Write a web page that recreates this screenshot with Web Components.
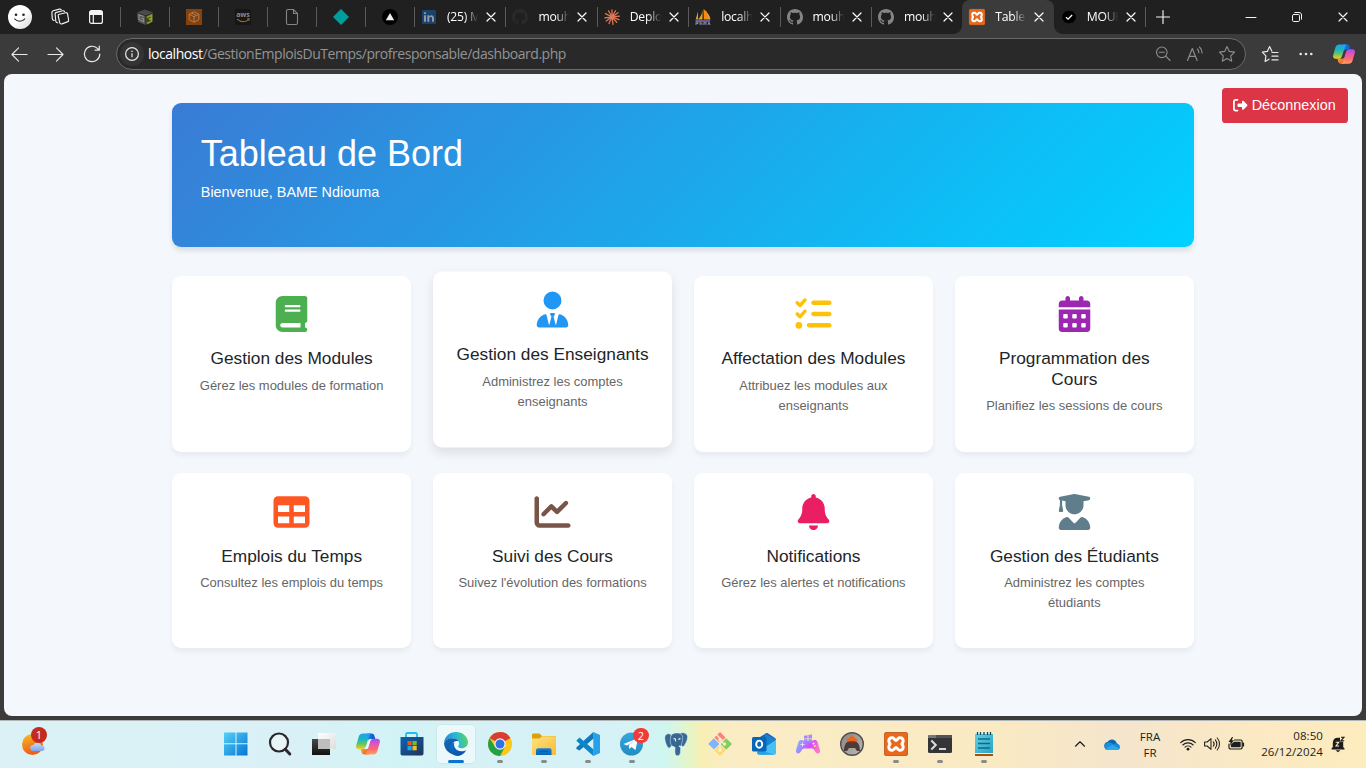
<!DOCTYPE html>
<html lang="fr">
<head>
<meta charset="utf-8">
<title>Tableau de Bord</title>
<style>
html,body{margin:0;height:100%;overflow:hidden;background:#3b3b3b}
body{font-family:"Liberation Sans",Arial,sans-serif}
</style>
</head>
<body>
<desktop-screen></desktop-screen>
<script>
const fa = (w, d) => [`0 0 ${w} 512`, `<path fill="currentColor" d="${d}"/>`];
const line = (s, w = 1) => `<g fill="none" stroke="currentColor" stroke-width="${w}" stroke-linecap="round" stroke-linejoin="round">${s}</g>`;
const GH = 'M8 0C3.58 0 0 3.58 0 8c0 3.54 2.29 6.53 5.47 7.59.4.07.55-.17.55-.38 0-.19-.01-.82-.01-1.49-2.01.37-2.53-.49-2.69-.94-.09-.23-.48-.94-.82-1.13-.28-.15-.68-.52-.01-.53.63-.01 1.08.58 1.23.82.72 1.21 1.87.87 2.33.66.07-.52.28-.87.51-1.07-1.78-.2-3.64-.89-3.64-3.95 0-.87.31-1.59.82-2.15-.08-.2-.36-1.02.08-2.12 0 0 .67-.21 2.2.82.64-.18 1.32-.27 2-.27s1.36.09 2 .27c1.53-1.04 2.2-.82 2.2-.82.44 1.1.16 1.92.08 2.12.51.56.82 1.27.82 2.15 0 3.07-1.87 3.75-3.65 3.95.29.25.54.73.54 1.48 0 1.07-.01 1.93-.01 2.2 0 .21.15.46.55.38A8.01 8.01 0 0 0 16 8c0-4.42-3.58-8-8-8z';
const grad = (id, x1, y1, x2, y2, ...stops) => `<linearGradient id="${id}" x1="${x1}" y1="${y1}" x2="${x2}" y2="${y2}">${stops.map((c, i) => `<stop offset="${i / (stops.length - 1)}" stop-color="${c}"/>`).join('')}</linearGradient>`;
const XAMPP = `<rect width="24" height="24" rx="2.5" fill="#e8691b"/><rect x=".5" y=".5" width="23" height="23" rx="2" fill="none" stroke="#c4622a"/><path d="M7.800 5.800h.8c1.500 0 2.300 2.700 3.400 2.700s1.900-2.700 3.400-2.700h.8a3 3 0 0 1 3 3c0 1.700-1.300 3.200-1.300 3.200s1.300 1.500 1.300 3.200a3 3 0 0 1-3 3h-.8c-1.500 0-2.300-2.700-3.400-2.700s-1.900 2.700-3.400 2.700h-.8a3 3 0 0 1-3-3c0-1.700 1.300-3.200 1.300-3.200s-1.300-1.500-1.300-3.200a3 3 0 0 1 3-3z" fill="none" stroke="#fff" stroke-width="3" stroke-linejoin="round"/>`;
const COPILOT = `<defs>${grad('a', .3, 0, .3, 1, '#2b9df0', '#16b5c8', '#65c466', '#f7cf1d')}${grad('b', .5, 0, .5, 1, '#a54ff0', '#e255b5', '#ff6a70', '#ffa45a')}${grad('c', 0, 0, 1, 0, '#1789f0', '#0b4fd6')}${grad('d', 0, 0, 1, 1, '#f5b52c', '#ef5133')}</defs><path d="M11 1.500h4.700c1.300 0 2.200.7 2.600 2l1 3.500h-4c-1.600 0-2.500.9-3 2.500z" fill="url(#c)"/><path d="M13 22.500H8.300c-1.300 0-2.200-.7-2.600-2l-1-3.500h4c1.600 0 2.500-.9 3-2.500z" fill="url(#d)"/><path d="M7 1.500h8.500c-1.500.4-2 1.300-2.500 2.900L10 14c-.7 2-1.700 3.200-4 3.200H3c-2.200 0-3.500-1.600-2.800-3.800l2.500-8.700C3.300 2.600 4.900 1.500 7 1.500z" fill="url(#a)"/><path d="M17 22.500H8.500c1.500-.4 2-1.300 2.500-2.900L14 10c.7-2 1.700-3.200 4-3.200h3c2.200 0 3.500 1.600 2.800 3.800l-2.500 8.700c-.6 2.100-2.200 3.200-4.300 3.200z" fill="url(#b)"/><path d="M12.700 7.300h2.700c-.8.500-1.200 1.300-1.600 2.600l-1.900 6.300c-.2.500-.5.700-1 .7H9c.8-.5 1.200-1.300 1.500-2.300l2-6.500z" fill="var(--gap,#eefafc)"/>`;
const ICONS = {
  book: fa(448, 'M96 0C43 0 0 43 0 96V416c0 53 43 96 96 96H384h32c17.700 0 32-14.300 32-32s-14.300-32-32-32V384c17.700 0 32-14.300 32-32V32c0-17.700-14.300-32-32-32H384 96zm0 384H352v64H96c-17.700 0-32-14.300-32-32s14.300-32 32-32zm32-240c0-8.800 7.200-16 16-16H336c8.800 0 16 7.200 16 16s-7.200 16-16 16H144c-8.800 0-16-7.200-16-16zm16 48H336c8.800 0 16 7.200 16 16s-7.200 16-16 16H144c-8.800 0-16-7.200-16-16s7.200-16 16-16z'),
  tie: fa(448, 'M96 128a128 128 0 1 0 256 0A128 128 0 1 0 96 128zm94.500 200.200l18.600 31L175.800 483.100l-36-146.900c-2-8.100-9.800-13.400-17.900-11.300C51.900 342.400 0 405.800 0 481.300c0 17 13.800 30.700 30.700 30.700H162.500c0 0 0 0 .1 0H168 280h5.500c0 0 0 0 .1 0H417.300c17 0 30.700-13.800 30.700-30.700c0-75.500-51.900-138.900-121.900-156.400c-8.100-2-15.900 3.300-17.900 11.300l-36 146.900L238.900 359.200l18.600-31c6.400-10.700-1.300-24.200-13.700-24.200H224 204.300c-12.400 0-20.100 13.600-13.700 24.200z'),
  list: fa(512, 'M152.100 38.200c9.900 8.900 10.700 24 1.800 33.900l-72 80c-4.400 4.900-10.600 7.800-17.200 7.900s-12.900-2.400-17.600-7L7 113C-2.300 103.600-2.300 88.400 7 79s24.600-9.400 33.900 0l22.100 22.100 55.100-61.200c8.900-9.900 24-10.700 33.900-1.800zm0 160c9.900 8.900 10.700 24 1.800 33.900l-72 80c-4.400 4.900-10.600 7.800-17.200 7.900s-12.900-2.400-17.600-7L7 273c-9.400-9.400-9.400-24.600 0-33.900s24.600-9.400 33.900 0l22.100 22.100 55.100-61.200c8.900-9.900 24-10.700 33.900-1.800zM224 96c0-17.700 14.300-32 32-32H480c17.700 0 32 14.300 32 32s-14.300 32-32 32H256c-17.700 0-32-14.300-32-32zm0 160c0-17.700 14.300-32 32-32H480c17.700 0 32 14.300 32 32s-14.300 32-32 32H256c-17.700 0-32-14.300-32-32zM160 416c0-17.700 14.300-32 32-32H480c17.700 0 32 14.300 32 32s-14.300 32-32 32H192c-17.700 0-32-14.300-32-32zM48 368a48 48 0 1 1 0 96 48 48 0 1 1 0-96z'),
  calendar: fa(448, 'M128 0c17.700 0 32 14.300 32 32V64H288V32c0-17.700 14.300-32 32-32s32 14.300 32 32V64h48c26.500 0 48 21.500 48 48v48H0V112C0 85.500 21.500 64 48 64H96V32c0-17.700 14.300-32 32-32zM0 192H448V464c0 26.500-21.500 48-48 48H48c-26.500 0-48-21.500-48-48V192zm64 80v32c0 8.800 7.200 16 16 16h32c8.800 0 16-7.200 16-16V272c0-8.800-7.200-16-16-16H80c-8.800 0-16 7.200-16 16zm128 0v32c0 8.800 7.200 16 16 16h32c8.800 0 16-7.200 16-16V272c0-8.800-7.200-16-16-16H208c-8.800 0-16 7.200-16 16zm144-16c-8.800 0-16 7.200-16 16v32c0 8.800 7.200 16 16 16h32c8.800 0 16-7.200 16-16V272c0-8.800-7.200-16-16-16H336zM64 400v32c0 8.800 7.200 16 16 16h32c8.800 0 16-7.200 16-16V400c0-8.800-7.200-16-16-16H80c-8.800 0-16 7.200-16 16zm144-16c-8.800 0-16 7.200-16 16v32c0 8.800 7.200 16 16 16h32c8.800 0 16-7.200 16-16V400c0-8.800-7.200-16-16-16H208zm112 16v32c0 8.800 7.200 16 16 16h32c8.800 0 16-7.200 16-16V400c0-8.800-7.200-16-16-16H336c-8.800 0-16 7.200-16 16z'),
  table: fa(512, 'M64 256V160H224v96H64zm0 64H224v96H64V320zm224 96V320H448v96H288zM448 256H288V160H448v96zM64 32C28.700 32 0 60.700 0 96V416c0 35.300 28.700 64 64 64H448c35.300 0 64-28.700 64-64V96c0-35.300-28.700-64-64-64H64z'),
  chart: fa(512, 'M64 64c0-17.700-14.300-32-32-32S0 46.300 0 64V400c0 44.200 35.800 80 80 80H480c17.700 0 32-14.300 32-32s-14.300-32-32-32H80c-8.800 0-16-7.200-16-16V64zm406.600 86.600c12.500-12.500 12.500-32.800 0-45.300s-32.800-12.500-45.300 0L320 210.700l-57.400-57.400c-12.500-12.500-32.800-12.500-45.300 0l-112 112c-12.500 12.500-12.500 32.800 0 45.300s32.800 12.500 45.300 0L240 221.300l57.400 57.400c12.500 12.500 32.800 12.500 45.300 0l128-128z'),
  bell: fa(448, 'M224 0c-17.700 0-32 14.300-32 32V51.200C119 66 64 130.600 64 208v18.800c0 47-17.300 92.400-48.500 127.600l-7.400 8.300c-8.400 9.400-10.400 22.900-5.300 34.400S19.400 416 32 416H416c12.600 0 24-7.400 29.200-18.900s3.100-25-5.300-34.400l-7.400-8.300C401.300 319.200 384 273.900 384 226.800V208c0-77.400-55-142-128-156.800V32c0-17.700-14.300-32-32-32zm45.300 493.300c12-12 18.700-28.300 18.700-45.300H224 160c0 17 6.700 33.300 18.700 45.300s28.300 18.700 45.300 18.700s33.300-6.700 45.300-18.700z'),
  graduate: fa(448, 'M219.300 .5c3.100-.6 6.300-.6 9.400 0l200 40C439.900 42.700 448 52.600 448 64s-8.100 21.300-19.300 23.500L352 102.900V160c0 70.700-57.300 128-128 128s-128-57.300-128-128V102.900L48 93.300v65.100l15.700 78.400c.9 4.700-.3 9.600-3.300 13.300s-7.600 5.900-12.400 5.900H16c-4.800 0-9.300-2.100-12.400-5.900s-4.300-8.600-3.300-13.300L16 158.400V86.600C6.500 83.300 0 74.300 0 64C0 52.600 8.100 42.700 19.300 40.500l200-40zM111.900 327.700c10.500-3.400 21.800 .4 29.400 8.500l71 75.500c6.300 6.700 17 6.700 23.300 0l71-75.500c7.600-8.100 18.900-11.900 29.400-8.500C401 348.600 448 409.400 448 481.300c0 17-13.800 30.700-30.700 30.700H30.700C13.800 512 0 498.200 0 481.300c0-71.900 47-132.700 111.900-153.600z'),
  logout: fa(512, 'M377.900 105.900L500.700 228.700c7.200 7.200 11.300 17.100 11.300 27.300s-4.100 20.100-11.300 27.300L377.900 406.100c-6.400 6.400-15 9.900-24 9.900c-18.700 0-33.900-15.200-33.900-33.900l0-62.100-128 0c-17.700 0-32-14.300-32-32l0-64c0-17.700 14.300-32 32-32l128 0 0-62.100c0-18.700 15.200-33.900 33.900-33.900c9 0 17.600 3.600 24 9.900zM160 96L96 96c-17.700 0-32 14.300-32 32l0 256c0 17.700 14.300 32 32 32l64 0c17.700 0 32 14.300 32 32s-14.300 32-32 32l-64 0c-53 0-96-43-96-96L0 128C0 75 43 32 96 32l64 0c17.700 0 32 14.300 32 32s-14.300 32-32 32z'),

  profile: ['0 0 24 24', `<defs>${grad('a', 0, 0, 1, 1, '#fff', '#fff', '#d6d6d6')}</defs><circle cx="12" cy="12" r="12" fill="url(#a)"/><circle cx="8" cy="9.800" r="1.300" fill="#222"/><circle cx="15.500" cy="9.800" r="1.300" fill="#222"/><path d="M6.800 14c2.300 3 7.600 3 9.900 0" fill="none" stroke="#222" stroke-width="1.200" stroke-linecap="round"/>`],
  spaces: ['0 0 18 18', line('<path d="M8.300 6.200l6.400-1.500c1-.2 1.700.3 1.900 1.200l1 6.100c.2 1-.4 1.700-1.300 1.900l-5.300 2c-1 .3-1.900-.1-2.200-1.100L7.200 8c-.2-1 .2-1.600 1.100-1.800zM6.700 14.800l-.9-.3c-.6-.3-.9-.8-1-1.500L4.100 6.300c-.1-1 .4-1.700 1.300-1.900l6.300-1.600c.8-.2 1.500 0 1.800.7M3.200 12.500l-.9-.4c-.6-.3-.9-.8-1-1.500L.9 4.700c-.1-1 .4-1.600 1.300-1.900l6.200-1.700c.8-.2 1.400 0 1.800.5"/>', 1.15)],
  tabs: ['0 0 14 14', line('<rect x=".6" y=".6" width="12.800" height="12.800" rx="2"/><path d="M.6 4.500h12.800M4.300 4.500v9"/>', 1.2) + '<path d="M1 1h12v3H1z" fill="currentColor"/>'],
  gns: ['0 0 16 16', '<path d="M0 3.500L8 .5l8 3-7 3z" fill="#4b4b4b"/><path d="M0 4l8.500 3v9L1 12.800z" fill="#545454"/><path d="M9 7l7-3v8.500L9 16z" fill="#3f4722"/><path d="M10 8.500L14.500 6v3L12 10.300l2.500-.8v2.800L10 14.500" fill="none" stroke="#8d9f2c" stroke-width="1.500"/><path d="M6.800 7.500L2 5.800v4.700l4.500 2.300v-3L4.200 9" fill="none" stroke="#8b8b8b" stroke-width="1.200"/>'],
  box: ['0 0 16 16', '<path fill="#84420f" d="M0 0h16v16H0z"/><g fill="none" stroke="#b07c52"><path d="M8 2.800l4.800 2.400v5.500L8 13.200l-4.800-2.500V5.200zM3.200 5.200L8 7.800l4.800-2.600M8 7.800v5.400M5.500 4l5 2.600"/></g>'],
  aws: ['0 0 16 16', '<path fill="#161616" d="M0 0h16v16H0z"/><text x="8" y="8" font-family="Open Sans,sans-serif" font-size="7" font-weight="700" fill="#8a8a8a" text-anchor="middle">aws</text><path d="M2 10c3.500 3 8 3.200 11.500 1M12 9.900l2.300-.1-.5 2.100" fill="none" stroke="#8b632d" stroke-width="1.100"/>'],
  page: ['0 0 16 16', '<path d="M2.500 2c0-.9.600-1.500 1.500-1.500h5.500l4 4V14c0 .9-.6 1.500-1.500 1.500H4c-.9 0-1.500-.6-1.500-1.500zM9.500.8V4.500h3.800" fill="none" stroke="#858585" stroke-width="1.100"/>'],
  diamond: ['0 0 16 16', '<path d="M8 0l8 8-8 8-8-8z" fill="#009e9b"/>'],
  tri: ['0 0 16 16', '<circle cx="8" cy="8" r="8" fill="#000"/><path d="M8 4l4.200 7.200H3.800z" fill="#eee"/>'],
  linkedin: ['0 0 16 16', '<rect x="1" y="1" width="14" height="14" rx="1" fill="#1b426c"/><path d="M3 6.300h2v6.500H3zM3 3.200h2v1.900H3zM6.300 6.300h1.900v1c1.300-2 4.800-1.400 4.800 1.600v3.900h-2V9.300c0-1.900-2.700-1.900-2.700 0v3.500h-2z" fill="#8c98a8"/>'],
  github: ['0 0 16 16', `<path d="${GH}" fill="#858585"/>`],
  githubdark: ['0 0 16 16', `<path d="${GH}" fill="#2a2a2b"/>`],
  claude: ['0 0 16 16', '<g stroke="#dd7656" stroke-width="1.300" stroke-linecap="round"><path d="M8 8L8 .8M8 8l3.500-6.200M8 8l6-4.300M8 8l7.300-.8M8 8l7 2.700M8 8l4.700 5.300M8 8l1 7.300M8 8l-3 6.500M8 8l-5.800 4M8 8L.8 8.800M8 8L1.400 4.600M8 8L4.500 1.700"/></g>'],
  pma: ['0 0 16 16', '<path d="M3 2.500v8H.7z" fill="#d5a155"/><path d="M7.500 1v9.500H3C6 7.500 7.200 4.500 7.500 1z" fill="#f6a01a"/><path d="M8.500.3c3.800 2 5.800 5.700 5.700 10.200H8.800z" fill="#f58c12"/><path d="M12.500 4.500c1.800 1.500 2.700 3.600 2.800 6h-1.500z" fill="#dca453"/><path d="M0 11h15.500l-1 2H1z" fill="#5f6184"/><path d="M1 16v-3h2v1.500H1M5 16v-4M5 14h2v2M9 16v-3l1 1.500 1-1.500v3M13 16l1-3 1 3" fill="none" stroke="#8184af"/>'],
  xampp: ['0 0 24 24', XAMPP],
  check: ['0 0 16 16', '<path d="M8 1.500l2 .7 2.200.2 1.200 1.800L14.800 6v4l-1.400 1.800-1.200 1.800-2.200.2-2 .7-2-.7-2.200-.2-1.200-1.800L1.200 10V6l1.400-1.800 1.200-1.800L6 2.200z" fill="#000"/><path d="M5 8.300l2.100 1.900 4-4.200" fill="none" stroke="#fff" stroke-width="1.300"/>'],
  x: ['0 0 10 10', line('<path d="M1 1l8 8M9 1L1 9"/>', 1.2)],
  plus: ['0 0 14 14', line('<path d="M7 .5v13M.5 7h13"/>', 1.15)],
  min: ['0 0 10 10', line('<path d="M0 5.500h10"/>', 1)],
  restore: ['0 0 10 10', line('<rect x=".5" y="2.500" width="7" height="7" rx="1.200"/><path d="M2.800.5h4.200c1.500 0 2.500 1 2.500 2.500v4.200"/>', 1)],
  back: ['0 0 18 18', line('<path d="M17 9H1M8 2L1 9l7 7"/>', 1.2)],
  fwd: ['0 0 18 18', line('<path d="M1 9h16M10 2l7 7-7 7"/>', 1.2)],
  reload: ['0 0 18 18', line('<path d="M16.800 9a7.700 7.700 0 1 1-2.700-5.900L16.300 5M16.300 1v4.200h-4.200"/>', 1.2)],
  info: ['0 0 14 14', line('<circle cx="7" cy="7" r="6.400"/>', 1.2) + '<path d="M6.400 6.200h1.200v4H6.400zM6.300 3.700h1.400V5H6.300z" fill="currentColor"/>'],
  zoomout: ['0 0 16 16', line('<circle cx="6.800" cy="6.300" r="5.300"/><path d="M4.300 6.300h5M10.800 10.200L15 14.500"/>', 1.1)],
  read: ['0 0 18 16', line('<path d="M1.500 14.500l4.800-12 4.800 12M3.200 10.300h6.200M11.500 3c1 1 1.300 2.200 1.300 3.700M13.500 1c1.800 1.600 2.600 3.500 2.600 6"/>', 1.15)],
  star: ['0 0 18 18', line('<path d="M9 1.500l2.300 4.900 5.300.7-3.900 3.700 1 5.400L9 13.600l-4.700 2.600 1-5.400L1.400 7.100l5.300-.7z"/>', 1.1)],
  fav: ['0 0 18 18', line('<path d="M8 14.200l-3.900 2.300.8-5.600L1.300 7.100l5-.7L8.600 1.500l2.200 4.600M11 7.500h6M11 11.200h6M11 14.900h6"/>', 1.2)],
  dots: ['0 0 14 4', '<g fill="currentColor"><circle cx="1.700" cy="2" r="1.300"/><circle cx="7" cy="2" r="1.300"/><circle cx="12.300" cy="2" r="1.300"/></g>'],
  copilot: ['0 0 24 24', COPILOT],

  weather: ['0 0 28 28', `<defs>${grad('a', 0, 0, .3, 1, '#f2c531', '#f48a1c', '#ec5f18')}${grad('b', 0, 0, 0, 1, '#c5d9fa', '#7ea5e8')}</defs><circle cx="10.500" cy="14.500" r="10.500" fill="url(#a)"/><path d="M11 21a3 3 0 0 1 .3-6 4.600 4.600 0 0 1 8.200.6 2.700 2.700 0 0 1 .6 5.400z" fill="url(#b)"/>`],
  start: ['0 0 24 24', `<defs><linearGradient id="a" gradientUnits="userSpaceOnUse" x1="0" y1="0" x2="24" y2="24"><stop stop-color="#57d2fb"/><stop offset="1" stop-color="#0074d1"/></linearGradient></defs><path fill="url(#a)" d="M0 .5h11.500v10.800H0zM12.500.5h11v10.800h-11zM0 12.300h11.500v11.200H0zM12.500 12.300h11v11.200h-11z"/>`],
  search: ['0 0 24 24', '<circle cx="11" cy="10.500" r="9" fill="#e8f4f6" stroke="#29292b" stroke-width="2.200"/><path d="M17.300 17.300l4.500 4.700" stroke="#29292b" stroke-width="3" stroke-linecap="round"/>'],
  taskview: ['0 0 24 24', `<defs>${grad('a', 0, 0, 0, 1, '#484848', '#111')}${grad('b', 0, 0, 1, 1, '#fff', '#ddd')}</defs><path d="M0 7h18v16H0z" fill="url(#a)"/><path d="M6 1h18v16H6z" fill="url(#b)"/><path d="M6 7h12v10H6z" fill="#bebebe"/>`],
  store: ['0 0 24 24', `<defs>${grad('a', 0, 0, 1, 1, '#0a65b4', '#223259')}</defs><path d="M6 6V2.500C6 1.700 6.500 1 7.500 1h8c1 0 1.500.7 1.500 1.500V6" fill="none" stroke="#25baf0" stroke-width="1.800"/><path d="M.5 5h23v16.500c0 1-.8 2-2 2h-19c-1.200 0-2-1-2-2z" fill="url(#a)"/><path d="M7.500 9h4.200v4.200H7.500z" fill="#f05023"/><path d="M12.500 9h4.200v4.200h-4.200z" fill="#7fba22"/><path d="M7.500 14h4.200v4.300H7.500z" fill="#17a9ef"/><path d="M12.500 14h4.200v4.300h-4.200z" fill="#ffbd18"/>`],
  edge: ['0 0 24 24', `<defs>${grad('a', 0, .5, 1, .3, '#2387d6', '#27b6dc', '#60d55a')}${grad('b', 0, 0, .7, 1, '#1768b9', '#0b56a5')}${grad('c', 0, 0, 1, 1, '#0b75ce', '#0b489c')}</defs><path d="M0 11C.5 4.500 5.500 0 12 0c7 0 12 5 12 10.300 0 3.800-3 6-6.200 6-2.600 0-3.700-.9-3.700-1.700 0-.7 1-1 1-3.100 0-2.900-2.800-5.200-6.400-5.200C4.300 6.300 1.200 8 0 11z" fill="url(#a)"/><path d="M0 11.500C1 8.200 4.200 6.300 8.300 6.300c3.200 0 5.400 1.300 6.300 3-3.500-1-6.600 1.300-6.600 5.200 0 4.500 3.800 8.200 8.800 7.200A12 12 0 0 1 0 11.500z" fill="url(#b)"/><path d="M10.300 10.500c-1.300 4.500 2.200 8.800 7 8.800 2.500 0 4-.8 5-1.400-2 3.600-5 5.600-8.600 6-4.700-.2-8-4-7.900-8.500 0-2.300 2-4.400 4.500-4.900z" fill="url(#c)"/>`],
  chrome: ['0 0 24 24', '<circle cx="12" cy="12" r="12" fill="#fbc71a"/><path d="M12 12L1.600 6A12 12 0 0 1 22.400 6z" fill="#d83c32"/><path d="M1.600 6l5.600 9 4.800 3-4 5.300A12 12 0 0 1 1.600 6z" fill="#25a047"/><path d="M12 12l4.800 3L12 24a12 12 0 0 1-4.500-.9z" fill="#25a047"/><circle cx="12" cy="12" r="5.700" fill="#f5f6f5"/><circle cx="12" cy="12" r="4.500" fill="#2d72e8"/>'],
  explorer: ['0 0 24 24', `<defs>${grad('a', 0, 0, 1, 1, '#ffe37f', '#f6ba37')}${grad('b', 0, 0, 0, 1, '#1380d7', '#0766b7')}</defs><path d="M0 3c0-1 .6-1.500 1.500-1.500h6L10 4h13c.6 0 1 .4 1 1v4H0z" fill="#dca008"/><path d="M0 6.500h7.500L10 4.200h13c.6 0 1 .4 1 1V22c0 .6-.4 1-1 1H1c-.6 0-1-.4-1-1z" fill="url(#a)"/><path d="M4 23v-4.500C4 17 5 16.200 6.300 16.200h11c1.300 0 2.200.8 2.200 2.300V23z" fill="url(#b)"/><path d="M7.500 19.200h8.500" stroke="#07569d"/>`],
  code: ['0 0 24 24', '<path d="M17.300 0L24 3v18l-6.700 3z" fill="#26a0e7"/><path d="M17.300 0v6.700L3.500 18.500 1.700 17.700.3 16.200v-.8z" fill="#1278bd"/><path d="M.3 8.700L3.500 5.500l13.800 11.800V24z" fill="#0a86ca"/>'],
  telegram: ['0 0 24 24', `<defs>${grad('a', 0, 0, 0, 1, '#35a7de', '#258bbf')}</defs><circle cx="11.500" cy="12" r="11.500" fill="url(#a)"/><path d="M3.500 12L18 6.300 15.500 18l-4-2.900-2.100 2-.7-4L16 7.900l-9 5.700z" fill="#fff"/>`],
  postgres: ['0 0 24 24', '<g fill="#376894" stroke="#d9eef5" stroke-width=".5"><path d="M7 2.500C3 .5 0 3 1 8c.6 3 2 7.500 4 8 1.300.3 2.500-2 3-3.500z"/><path d="M15.500 1.500C20-.5 24 2 23.500 6c-.5 3-2.500 7-4.500 9l-3-3z"/><path d="M7.500 2.800C10 .5 16 .2 18 3c1.300 2.500.6 7-1 10.500-.5 2-.5 3.500-.5 5.500 0 3-1 4.700-3 4.700-1.800 0-2.500-1.300-2.500-3.400l-.2-5-3.500-1.800C5.800 10.500 6 5.500 7.500 2.800z"/></g><path d="M9.500 7c1.500-1 2.500 0 2 2.500M16.500 7c-1-.8-1.700-.3-1.500 1M9.500 14.500c-.7 1.200-2 1.500-3.500 1.500M15 14l3 1.800 4-.8M11 15.500c-.5 2-1.500 2-3 1.500" stroke="#eaf4f6" stroke-width="1.100" fill="none"/>'],
  git: ['0 0 24 24', '<path d="M12 0l5.500 5.500L12 11 6.500 5.500z" fill="#fd7f7f"/><path d="M5.800 6.200L11.500 12 6 17.500.2 12z" fill="#80b4ff"/><path d="M18.200 6.200L24 12l-5.800 5.700L12.500 12z" fill="#85ce5e"/><path d="M12 12.500l5.500 5.800L12 24l-5.500-5.500z" fill="#fbdc72"/><path d="M8.300 2.800L15 9M12 6.500V19M12.500 9l4.500 4" stroke="#fbedc7" stroke-width="1.400"/><g fill="#fbedc7"><circle cx="12" cy="7.500" r="1.700"/><circle cx="16.500" cy="12" r="1.700"/><circle cx="12" cy="18" r="1.900"/></g>'],
  outlook: ['0 0 24 24', '<path d="M4 7.500L14 1.200c.6-.3 1.200-.3 1.800 0L23 6c.6.4 1 1 1 1.700L14 16z" fill="#1768bb"/><path d="M13 1.500L24 8 13 15z" fill="#1a82d2"/><path d="M24 8v13c0 1-.8 1.800-1.800 1.800H7.500L10 17z" fill="#45c0f0"/><path d="M8 18l14.500 4.800H7.500C6 22.800 5 22 5 20z" fill="#2aa0e2"/><rect y="5" width="14.500" height="14.500" rx="1.500" fill="#0866b9"/><ellipse cx="7.200" cy="12.200" rx="3" ry="3.600" fill="none" stroke="#fff" stroke-width="1.900"/>'],
  gamepad: ['0 0 24 24', `<defs>${grad('a', 0, 0, 1, .3, '#7bc3f6', '#9e8cff', '#d54bff', '#f778c6')}</defs><path d="M2.500 10c.5-1.500 1.500-2 3-2 1 0 2 1 3 1h7c1 0 2-1 3-1 1.500 0 2.500.5 3 2L24 18c.3 1.800-.5 3.500-2 3.500-3 0-3.500-5-6-5H8c-2.500 0-3 5-6 5-1.500 0-2.300-1.700-2-3.500z" fill="url(#a)"/><path d="M8 3.800l3.600-.6v3.300H8zM12.400 3l3.600-.6v4.100h-3.600zM8 7.200h3.600v3.300H8zM12.400 7.200H16v3.300h-3.600z" fill="#a488ff"/><path d="M4.500 12.500h4M6.500 10.500v4" stroke="#f5dff3" stroke-width=".9"/><circle cx="17.500" cy="11.500" r="1" fill="#fff"/><circle cx="18.800" cy="14" r="1" fill="#ffe36d"/>`],
  bear: ['0 0 24 24', `<defs>${grad('a', 0, 0, 1, 1, '#868482', '#bdbbb6')}</defs><circle cx="12" cy="12" r="11.300" fill="url(#a)" stroke="#4f4e4d" stroke-width="1.400"/><path d="M4 19c0-6 2-9 5-10h6c3 1 5 4 5 10h-3l-2-3H9l-2 3z" fill="#4b3c39"/><path d="M6 8l3-2 3-3 3 3 3 2-2 2H8z" fill="#ed651b"/><path d="M8 9h8l-2 1.500h-4z" fill="#b72d1c"/>`],
  terminal: ['0 0 24 24', '<rect y="3" width="24" height="18" rx="1.500" fill="#343537"/><path d="M0 6V4.500C0 3.600.6 3 1.500 3h21c.9 0 1.500.6 1.500 1.500V6z" fill="#74777b"/><path d="M8 3h16v3H8z" fill="#505357"/><path d="M3.300 8.500L7.800 13l-4.500 4.500" fill="none" stroke="#ddd" stroke-width="2"/><path d="M11 17h7" stroke="#fff" stroke-width="1.600"/>'],
  notepad: ['0 0 24 24', `<defs>${grad('a', 0, 0, 1, 1, '#61cfe5', '#29a2c2')}</defs><path d="M3 20h18v4H3z" fill="#a74f0b"/><path d="M3 2h18v19.500H3z" fill="url(#a)"/><path d="M3 21h18v1H3z" fill="#eee"/><path d="M5.500 0v3M8.500 0v3M12 0v3M15.500 0v3M18.500 0v3" stroke="#0d4a64" stroke-width="1.300"/><path d="M6 7h12M6 11.500h12M6 16h12" stroke="#10698b" stroke-width="1.500"/>`],
  chevron: ['0 0 10 6', line('<path d="M.5 5.200L5 .8l4.500 4.400"/>', 1.2)],
  cloud: ['0 0 16 11', `<path d="M4 11a4 4 0 0 1-.6-7.900 5 5 0 0 1 9.300 1.200A3.500 3.500 0 0 1 12.500 11z" fill="#0a67b8"/><path d="M3.800 11a3.800 3.800 0 0 1 0-7.300c1.500-.5 3 0 5 1.200L16 9c-.5 1.300-1.800 2-3 2z" fill="#1492df"/><path d="M9 5.300c1.200-.9 3-1.200 4.300-.5 2.200.8 3.200 2.500 2.500 4.400z" fill="#1789d6"/><path d="M1 9.500L9 6l6.300 3.700c-.7.9-1.600 1.300-2.800 1.300H4C2.700 11 1.700 10.500 1 9.500z" fill="#28a8ea"/>`],
  wifi: ['0 0 16 13', line('<path d="M.7 4.700a10.300 10.300 0 0 1 14.600 0M2.800 7a7.400 7.400 0 0 1 10.400 0M5 9.200a4.300 4.300 0 0 1 6 0"/>', 1.1) + '<circle cx="8" cy="11.200" r="1.400" fill="currentColor"/>'],
  sound: ['0 0 16 14', line('<path d="M.6 5h2.600L7 1.700v10.600L3.200 9H.6zM9.300 4.800c1 1.200 1 3.200 0 4.400M11.300 2.900c2 2.200 2 6 0 8.200M13.200 1c3 3.200 3 8.800 0 12"/>', 1.05)],
  battery: ['0 0 16 14', line('<path d="M6.500 3h6c1 0 1.700.7 1.700 1.700v5.600c0 1-.7 1.700-1.700 1.700H2.700C1.700 12 1 11.300 1 10.300V7M15.500 6v3"/>', 1.2) + '<path d="M3 7.500L6 4.700h6c.4 0 .7.300.7.7v4.200c0 .4-.3.700-.7.700H3.500c-.4 0-.7-.3-.7-.7zM4 0L.5 5h2L2 8.500 6 3.300H3.800L5 0z" fill="currentColor"/>'],
  bellz: ['0 0 14 16', '<path d="M1.800 11V7c0-3.300 2-5.200 5-5.200h5.400V11l1.300 1.500v1H.5v-1zM4.500 14.300h5L7 16.200z" fill="currentColor"/><path d="M9 .5h5v5H9z" fill="#fbeabf"/><path d="M4.700 6.300h3L5 10h3" fill="none" stroke="#fbecc2" stroke-width="1.100"/><path d="M10 1.200h3l-3 3.500h3.200" fill="none" stroke="currentColor" stroke-width="1.100"/>'],
};

class Base extends HTMLElement {
  constructor() { super(); this.attachShadow({ mode: 'open' }); }
  connectedCallback() { this.shadowRoot.innerHTML = this.render(); }
  a(n) { return this.getAttribute(n) || ''; }
}
const define = (tag, render) => customElements.define(tag, class extends Base { render() { return render(this); } });
const icon = (n, w, h = w) => `<ui-icon name="${n}" w="${w}" h="${h}"></ui-icon>`;

define('ui-icon', e => {
  const [vb, body] = ICONS[e.a('name')];
  return `<style>:host{display:inline-flex;flex:none;width:${e.a('w')}px;height:${e.a('h')}px}svg{display:block;width:100%;height:100%;overflow:visible}</style><svg viewBox="${vb}">${body}</svg>`;
});

define('pinned-tab', e => `<style>
:host{display:flex;width:49px;box-sizing:border-box;height:20px;border-left:1px solid #5b5b5b;align-items:center;justify-content:center}
</style>${icon(e.a('icon'), 16)}`);

define('browser-tab', e => `<style>
:host{display:flex;flex:none;width:91.400px;height:34px;box-sizing:border-box;align-items:center;color:#fff;position:relative;padding-left:7px;font:12.200px "Open Sans","Noto Sans",sans-serif}
:host::before{content:"";position:absolute;left:0;top:7px;height:20px;width:1px;background:#5b5b5b}
:host([active]){background:#3b3b3b;border-radius:8px 8px 0 0}
:host([active])::before,:host([after])::before{display:none}
.l,.r{position:absolute;bottom:0;width:8px;height:8px;display:none}
:host([active]) .l,:host([active]) .r{display:block}
.l{left:-8px;background:radial-gradient(circle at 0 0,transparent 7.500px,#3b3b3b 8px)}
.r{right:-8px;background:radial-gradient(circle at 100% 0,transparent 7.500px,#3b3b3b 8px)}
span{width:32px;margin:-2px 7px 0 10px;overflow:hidden;white-space:nowrap;letter-spacing:-.25px;-webkit-mask:linear-gradient(90deg,#000 55%,transparent 98%);mask:linear-gradient(90deg,#000 55%,transparent 98%)}
</style><i class="l"></i><i class="r"></i>${icon(e.a('icon'), 16)}<span><slot></slot></span>${icon('x', 10)}`);

define('tab-strip', () => `<style>
:host{display:flex;height:34px;background:#202020;color:#f3f3f3;align-items:center}
.lead{display:flex;width:120px;box-sizing:border-box;padding-left:8px;align-items:center}
.lead ui-icon:nth-child(2){margin-left:19px}.lead ui-icon:nth-child(3){margin-left:20px}
.pins,.tabs{display:flex;align-items:center}
.new{border-left:1px solid #5b5b5b;height:20px;display:flex;align-items:center;padding-left:10px;margin-top:-1px}
.ctl{margin-left:auto;display:flex;align-items:center;gap:36px;padding-right:18px}
</style>
<div class="lead">${icon('profile', 24)}${icon('spaces', 18)}${icon('tabs', 14)}</div>
<div class="pins">${['gns', 'box', 'aws', 'page', 'diamond', 'tri'].map(i => `<pinned-tab icon="${i}"></pinned-tab>`).join('')}</div>
<div class="tabs"><browser-tab icon="linkedin">(25) Mes</browser-tab><browser-tab icon="githubdark">mouha</browser-tab><browser-tab icon="claude">Deploy</browser-tab><browser-tab icon="pma">localho</browser-tab><browser-tab icon="github">mouha</browser-tab><browser-tab icon="github">mouha</browser-tab><browser-tab icon="xampp" active>Tableau</browser-tab><browser-tab icon="check" after>MOUH</browser-tab></div>
<div class="new">${icon('plus', 14)}</div>
<div class="ctl">${icon('min', 10)}${icon('restore', 10)}${icon('x', 10)}</div>`);

define('address-bar', () => `<style>
:host{display:flex;height:40px;background:#3b3b3b;color:#e8e8e8;align-items:center;padding:0 11px 0 11px;box-sizing:border-box;--gap:#3b3b3b}
.nav{display:flex;gap:19px;width:105px;box-sizing:border-box;align-items:center}
.box{display:flex;width:1130px;height:32px;box-sizing:border-box;border:1px solid #6b6b6b;border-radius:16px;background:#292929;align-items:center;padding:0 9px 0 3px}
.i{width:24px;height:24px;border-radius:50%;background:#343434;display:flex;align-items:center;justify-content:center}
.url{font:14px "Open Sans","Noto Sans",sans-serif;color:#949494;margin:-2px 0 0 4px;letter-spacing:-.46px;white-space:nowrap}
b{font-weight:400;color:#fff}
.r{margin-left:auto;display:flex;gap:14.500px;color:#8e8e8e;align-items:center}
.t{display:flex;align-items:center;margin-left:auto}
.t ui-icon:nth-child(2){margin:0 20px}
</style>
<div class="nav">${icon('back', 17)}${icon('fwd', 17)}${icon('reload', 18)}</div>
<div class="box"><div class="i">${icon('info', 14)}</div><div class="url"><b>localhost</b>/GestionEmploisDuTemps/profresponsable/dashboard.php</div>
<div class="r">${icon('zoomout', 16)}${icon('read', 18, 16)}${icon('star', 18)}</div></div>
<div class="t">${icon('fav', 18)}${icon('dots', 14, 4)}${icon('copilot', 22)}</div>`);

define('welcome-banner', () => `<style>
:host{display:block;height:144px;box-sizing:border-box;padding:28.800px;border-radius:9px;color:#fff;background:linear-gradient(135deg,#3a7bd5,#00d2ff);box-shadow:0 3.600px 5.400px rgba(0,0,0,.1)}
h1{font-size:36px;line-height:43.200px;font-weight:400;margin:0 0 7.200px}
p{margin:0;font-size:14.400px;line-height:21.600px}
</style><h1><slot name="title"></slot></h1><p><slot></slot></p>`);

define('dash-card', e => `<style>
:host{display:block;box-sizing:border-box;padding:20.800px 22px 0;border-radius:9px;background:#fff;text-align:center;box-shadow:0 3.600px 5.400px rgba(0,0,0,.05)}
:host([raised]){transform:translateY(-4.500px);box-shadow:0 5.400px 10.800px rgba(0,0,0,.1)}
.ic{display:flex;justify-content:center;color:${e.a('color')};margin-bottom:16px}
h2{margin:0 0 7px;font-size:17.280px;line-height:20.200px;font-weight:400;color:#212529}
p{margin:0;font-size:12.960px;line-height:20px;color:#666}
</style><div class="ic">${icon(e.a('icon'), 37, 36)}</div><h2><slot name="title"></slot></h2><p><slot></slot></p>`);

define('logout-button', () => `<style>
:host{display:flex;width:126px;height:35px;box-sizing:border-box;align-items:center;justify-content:center;gap:4px;padding:0 1px 1px 0;border-radius:3.600px;background:#dc3545;color:#fff;font-size:14.400px}
</style>${icon('logout', 14.4)}<span><slot></slot></span>`);

const CARDS = [
  ['book', '#4caf50', 'Gestion des Modules', 'Gérez les modules de formation'],
  ['tie', '#2196f3', 'Gestion des Enseignants', 'Administrez les comptes enseignants', 'raised'],
  ['list', '#ffc107', 'Affectation des Modules', 'Attribuez les modules aux enseignants'],
  ['calendar', '#9c27b0', 'Programmation des Cours', 'Planifiez les sessions de cours'],
  ['table', '#ff5722', 'Emplois du Temps', 'Consultez les emplois du temps'],
  ['chart', '#795548', 'Suivi des Cours', "Suivez l'évolution des formations"],
  ['bell', '#e91e63', 'Notifications', 'Gérez les alertes et notifications'],
  ['graduate', '#607d8b', 'Gestion des Étudiants', 'Administrez les comptes étudiants'],
];
define('dashboard-page', () => `<style>
:host{display:block;position:relative;box-sizing:border-box;height:642px;margin:0 4px 4px;padding-top:28.800px;border-radius:8px;background:#f4f7fc;overflow:hidden}
main{width:1022px;margin:0 auto}
.grid{display:grid;grid-template:176px 175.200px / repeat(4,1fr);gap:21.600px;margin-top:28.800px}
logout-button{position:absolute;top:14px;right:14px}
</style>
<logout-button>Déconnexion</logout-button>
<main><welcome-banner><span slot="title">Tableau de Bord</span>Bienvenue, BAME Ndiouma</welcome-banner>
<div class="grid">${CARDS.map(([i, c, t, d, r = '']) => `<dash-card icon="${i}" color="${c}" ${r}><span slot="title">${t}</span>${d}</dash-card>`).join('')}</div></main>`);

define('task-item', e => `<style>
:host{display:flex;position:relative;width:44px;height:48px;align-items:center;justify-content:center}
.p{display:flex;width:38px;height:38px;align-items:center;justify-content:center;border-radius:4px}
:host([active]) .p{background:rgba(255,255,255,.55);box-shadow:0 0 0 .5px rgba(0,0,0,.08)}
:host([running])::after,:host([active])::after{content:"";position:absolute;bottom:5px;left:19px;width:6px;height:3px;border-radius:2px;background:#868c8a}
:host([active])::after{left:14px;width:16px;background:#0a74cf}
b{position:absolute;top:8px;left:23px;width:16px;height:15px;border-radius:8px;background:#f03c37;color:#fff;font:11px/15px "Open Sans",sans-serif;text-align:center}
</style><div class="p">${icon(e.a('icon'), 24)}</div>${e.a('badge') ? `<b>${e.a('badge')}</b>` : ''}`);

const TASKS = ['start', 'search', 'taskview', 'copilot', 'store', 'edge active', 'chrome running', 'explorer running', 'code running', 'telegram running badge="2"', 'postgres', 'git', 'outlook', 'gamepad', 'bear', 'xampp running', 'terminal running', 'notepad running'];
define('task-bar', () => `<style>
:host{display:flex;height:48px;box-sizing:border-box;box-shadow:inset 0 1px #b1b7b8;align-items:center;color:#1d1d1d;font:11.500px/16px "Open Sans","Noto Sans",sans-serif;background:linear-gradient(90deg,#dbf1f6 0,#d9f1f6 300px,#d2f3f5 400px,#d7f1f6 500px,#d5f2f5 630px,#cff6f1 665px,#e3f5c9 688px,#f8efb4 703px,#faecc3 725px,#f9eac3 1000px,#f5e5cd 1120px,#f9e8c6 1210px,#fdecbd)}
.w{position:relative;display:flex;width:214px;box-sizing:border-box;padding-left:22px}
.w b{position:absolute;left:31px;top:-3px;width:16px;height:16px;border-radius:50%;background:#c42b1c;color:#fff;font:11px/16px "Open Sans",sans-serif;text-align:center}
.apps,.tray,.net{display:flex;align-items:center}
.tray{margin-left:auto;padding-right:21px}
.sp{width:19px}
.lang{width:30px;text-align:center;margin:2px 15px 0 15px}
.net{gap:8px}
.clock{text-align:right;width:70px;margin:0 8px 0 9px;letter-spacing:.08px;white-space:nowrap}
</style>
<div class="w">${icon('weather', 28)}<b>1</b></div>
<div class="apps">${TASKS.map(t => `<task-item icon="${t.split(' ')[0]}" ${t.split(' ').slice(1).join(' ')}></task-item>`).join('')}</div>
<div class="tray">${icon('chevron', 10, 6)}<span class="sp"></span>${icon('cloud', 16, 11)}<div class="lang">FRA<br>FR</div><div class="net">${icon('wifi', 16, 13)}${icon('sound', 16, 14)}${icon('battery', 16, 14)}</div><div class="clock">08:50<br>26/12/2024</div>${icon('bellz', 14, 16)}</div>`);

define('desktop-screen', () => `<style>
:host{display:flex;flex-direction:column;width:1366px;height:768px;background:#3b3b3b;overflow:hidden}
:host>*{flex:none}
</style><tab-strip></tab-strip><address-bar></address-bar><dashboard-page></dashboard-page><task-bar></task-bar>`);
</script>
</body>
</html>
